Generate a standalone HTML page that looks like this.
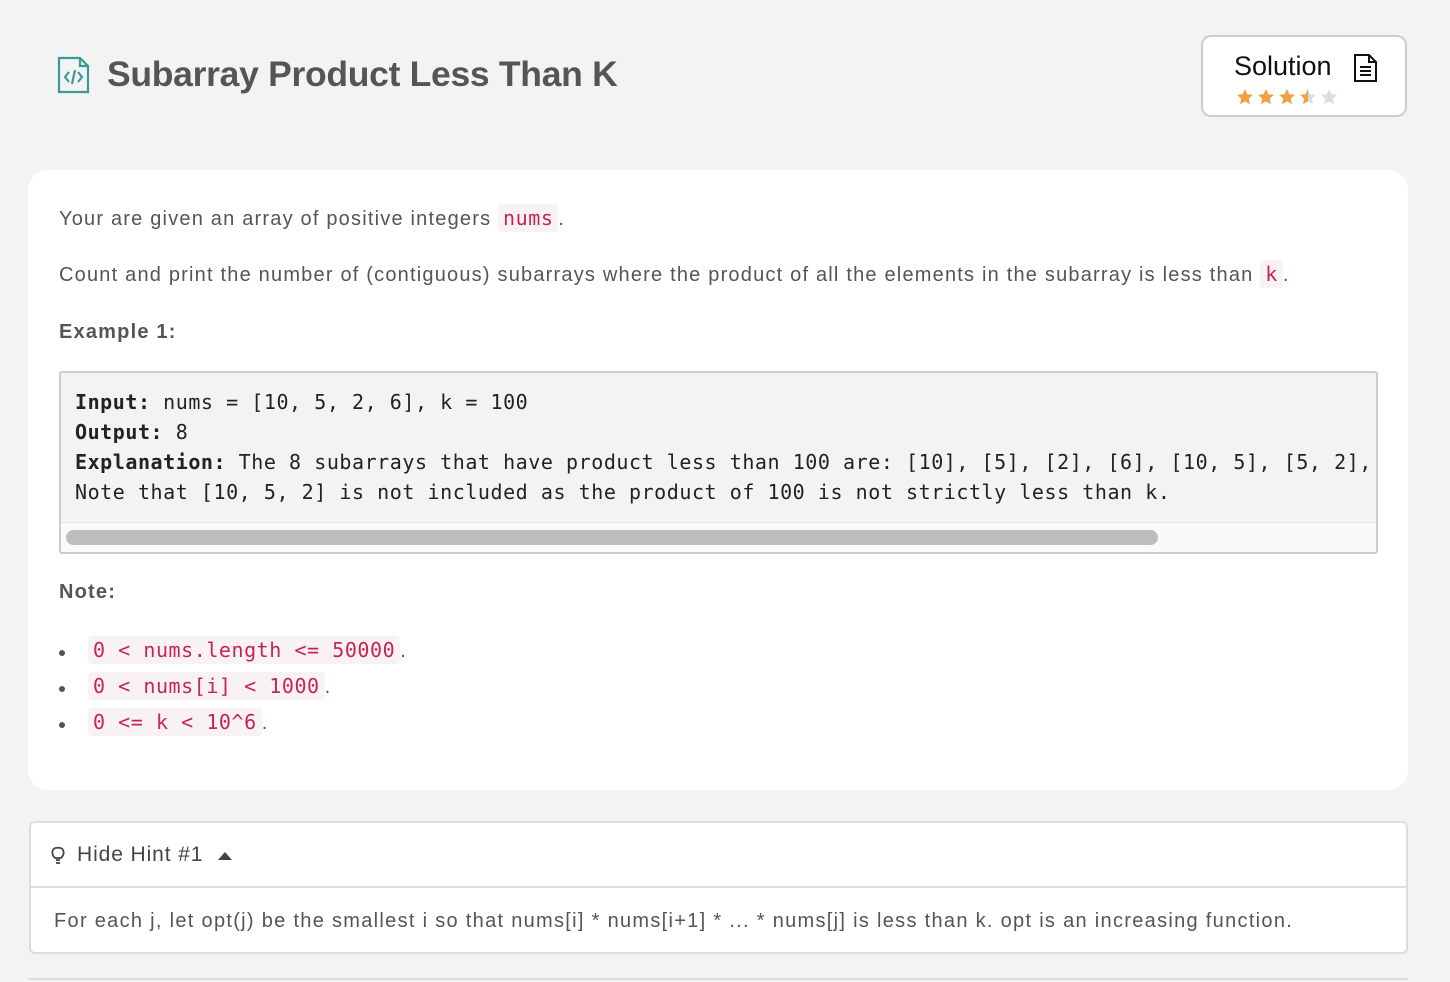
<!DOCTYPE html>
<html><head><meta charset="utf-8"><style>
*{box-sizing:border-box;margin:0;padding:0}
body{width:1450px;height:982px;background:#f3f3f3;font-family:"Liberation Sans",sans-serif;color:#555;position:relative;overflow:hidden}
.title{position:absolute;left:107px;top:54px;font-size:35.5px;font-weight:bold;color:#555;letter-spacing:-0.3px}
.sol{position:absolute;left:1201px;top:35px;width:206px;height:82px;background:#fff;border:2px solid #ccc;border-radius:10px}
.sol .t{position:absolute;left:31px;top:14px;font-size:27px;color:#111}
.card{position:absolute;left:28px;top:170px;width:1380px;height:620px;background:#fff;border-radius:20px}
p,.h{position:absolute;left:31px;font-size:20px;letter-spacing:1.2px;white-space:nowrap}
.c{font-family:"DejaVu Sans Mono",monospace;font-size:20px;letter-spacing:0.55px;color:#c7254e;background:#f9f2f4;border-radius:4px;padding:2px 5px}
.pre{position:absolute;left:31px;top:201px;width:1319px;height:183px;background:#f3f3f3;border:2px solid #ccc;border-radius:3px;overflow:hidden}
.pre .code{position:absolute;left:14px;top:14px;font-family:"DejaVu Sans Mono",monospace;font-size:20px;letter-spacing:0.55px;line-height:30px;white-space:pre;color:#222}
.pre .track{position:absolute;left:0;right:0;bottom:0;height:30px;background:#fafafa;border-top:1px solid #e5e5e5}
.pre .thumb{position:absolute;left:5px;top:7px;width:1092px;height:15px;background:#bdbdbd;border-radius:8px}
li{position:absolute;left:31px;font-size:20px;list-style:none;white-space:nowrap}
li:before{content:"";position:absolute;left:0;top:12px;width:6px;height:6px;border-radius:50%;background:#555}
li>span{margin-left:29px}
.hint{position:absolute;left:29px;top:821px;width:1379px;height:133px;background:#fff;border:2px solid #ddd;border-radius:6px}
.hint .hd{position:absolute;left:0;right:0;top:0;height:65px;border-bottom:2px solid #ddd}
</style></head><body>
<svg style="position:absolute;left:57px;top:56px" width="33" height="38" viewBox="0 0 33 38" fill="none" stroke="#3a9b96" stroke-width="2.2"><path d="M2 2h21l8 8v26H2z M23 2v8h8"/><path d="M12 16l-4 5 4 5 M21 16l4 5-4 5 M18 14l-3 14"/></svg>
<div class="title">Subarray Product Less Than K</div>
<div class="sol"><div class="t">Solution</div>
<svg style="position:absolute;left:150px;top:16px" width="26" height="30" viewBox="0 0 26 30" fill="none" stroke="#111" stroke-width="2"><path d="M2 2h14l7 7v19H2z M16 2v7h7 M7 14h11 M7 18h11 M7 22h11"/></svg>
<svg style="position:absolute;left:33px;top:51px" width="104" height="20" viewBox="0 0 104 20">
<defs><path id="s" d="M9 1l2.4 5.2 5.6.6-4.2 3.8 1.2 5.6L9 13.4 4 16.2l1.2-5.6L1 6.8l5.6-.6z"/><linearGradient id="g"><stop offset="50%" stop-color="#f0a040"/><stop offset="50%" stop-color="#ddd"/></linearGradient></defs>
<use href="#s" fill="#f0a040"/><use href="#s" x="21" fill="#f0a040"/><use href="#s" x="42" fill="#f0a040"/><use href="#s" x="63" fill="url(#g)"/><use href="#s" x="84" fill="#ddd"/></svg></div>
<div class="card">
<p style="top:36px">Your are given an array of positive integers <span class="c">nums</span>.</p>
<p style="top:92px">Count and print the number of (contiguous) subarrays where the product of all the elements in the subarray is less than <span class="c">k</span>.</p>
<div class="h" style="top:151px;font-weight:bold">Example 1:</div>
<div class="pre"><div class="code"><b>Input:</b> nums = [10, 5, 2, 6], k = 100
<b>Output:</b> 8
<b>Explanation:</b> The 8 subarrays that have product less than 100 are: [10], [5], [2], [6], [10, 5], [5, 2], [2, 6], [5, 2, 6].
Note that [10, 5, 2] is not included as the product of 100 is not strictly less than k.</div><div class="track"><div class="thumb"></div></div></div>
<div class="h" style="top:411px;font-weight:bold">Note:</div>
<li style="top:468px"><span><span class="c">0 &lt; nums.length &lt;= 50000</span>.</span></li>
<li style="top:504px"><span><span class="c">0 &lt; nums[i] &lt; 1000</span>.</span></li>
<li style="top:540px"><span><span class="c">0 &lt;= k &lt; 10^6</span>.</span></li>
</div>
<div class="hint"><div class="hd">
<svg style="position:absolute;left:20px;top:22px" width="14" height="22" viewBox="0 0 14 22" fill="none" stroke="#444" stroke-width="1.8"><path d="M4 13C1 10 1 7 2 5 3 2 11 2 12 5 13 7 13 10 10 13z"/><path d="M5 15h4M5 18h4" /></svg>
<div style="position:absolute;left:46px;top:20px;font-size:21px;letter-spacing:0.9px;color:#444">Hide Hint #1</div>
<div style="position:absolute;left:187px;top:29px;width:0;height:0;border-left:7px solid transparent;border-right:7px solid transparent;border-bottom:8px solid #444"></div></div>
<div style="position:absolute;left:23px;top:87px;font-size:20px;letter-spacing:1.3px;white-space:nowrap;color:#555">For each j, let opt(j) be the smallest i so that nums[i] * nums[i+1] * ... * nums[j] is less than k. opt is an increasing function.</div></div>
<div style="position:absolute;left:28px;top:978px;width:1380px;height:2px;background:#ddd"></div>
</body></html>
